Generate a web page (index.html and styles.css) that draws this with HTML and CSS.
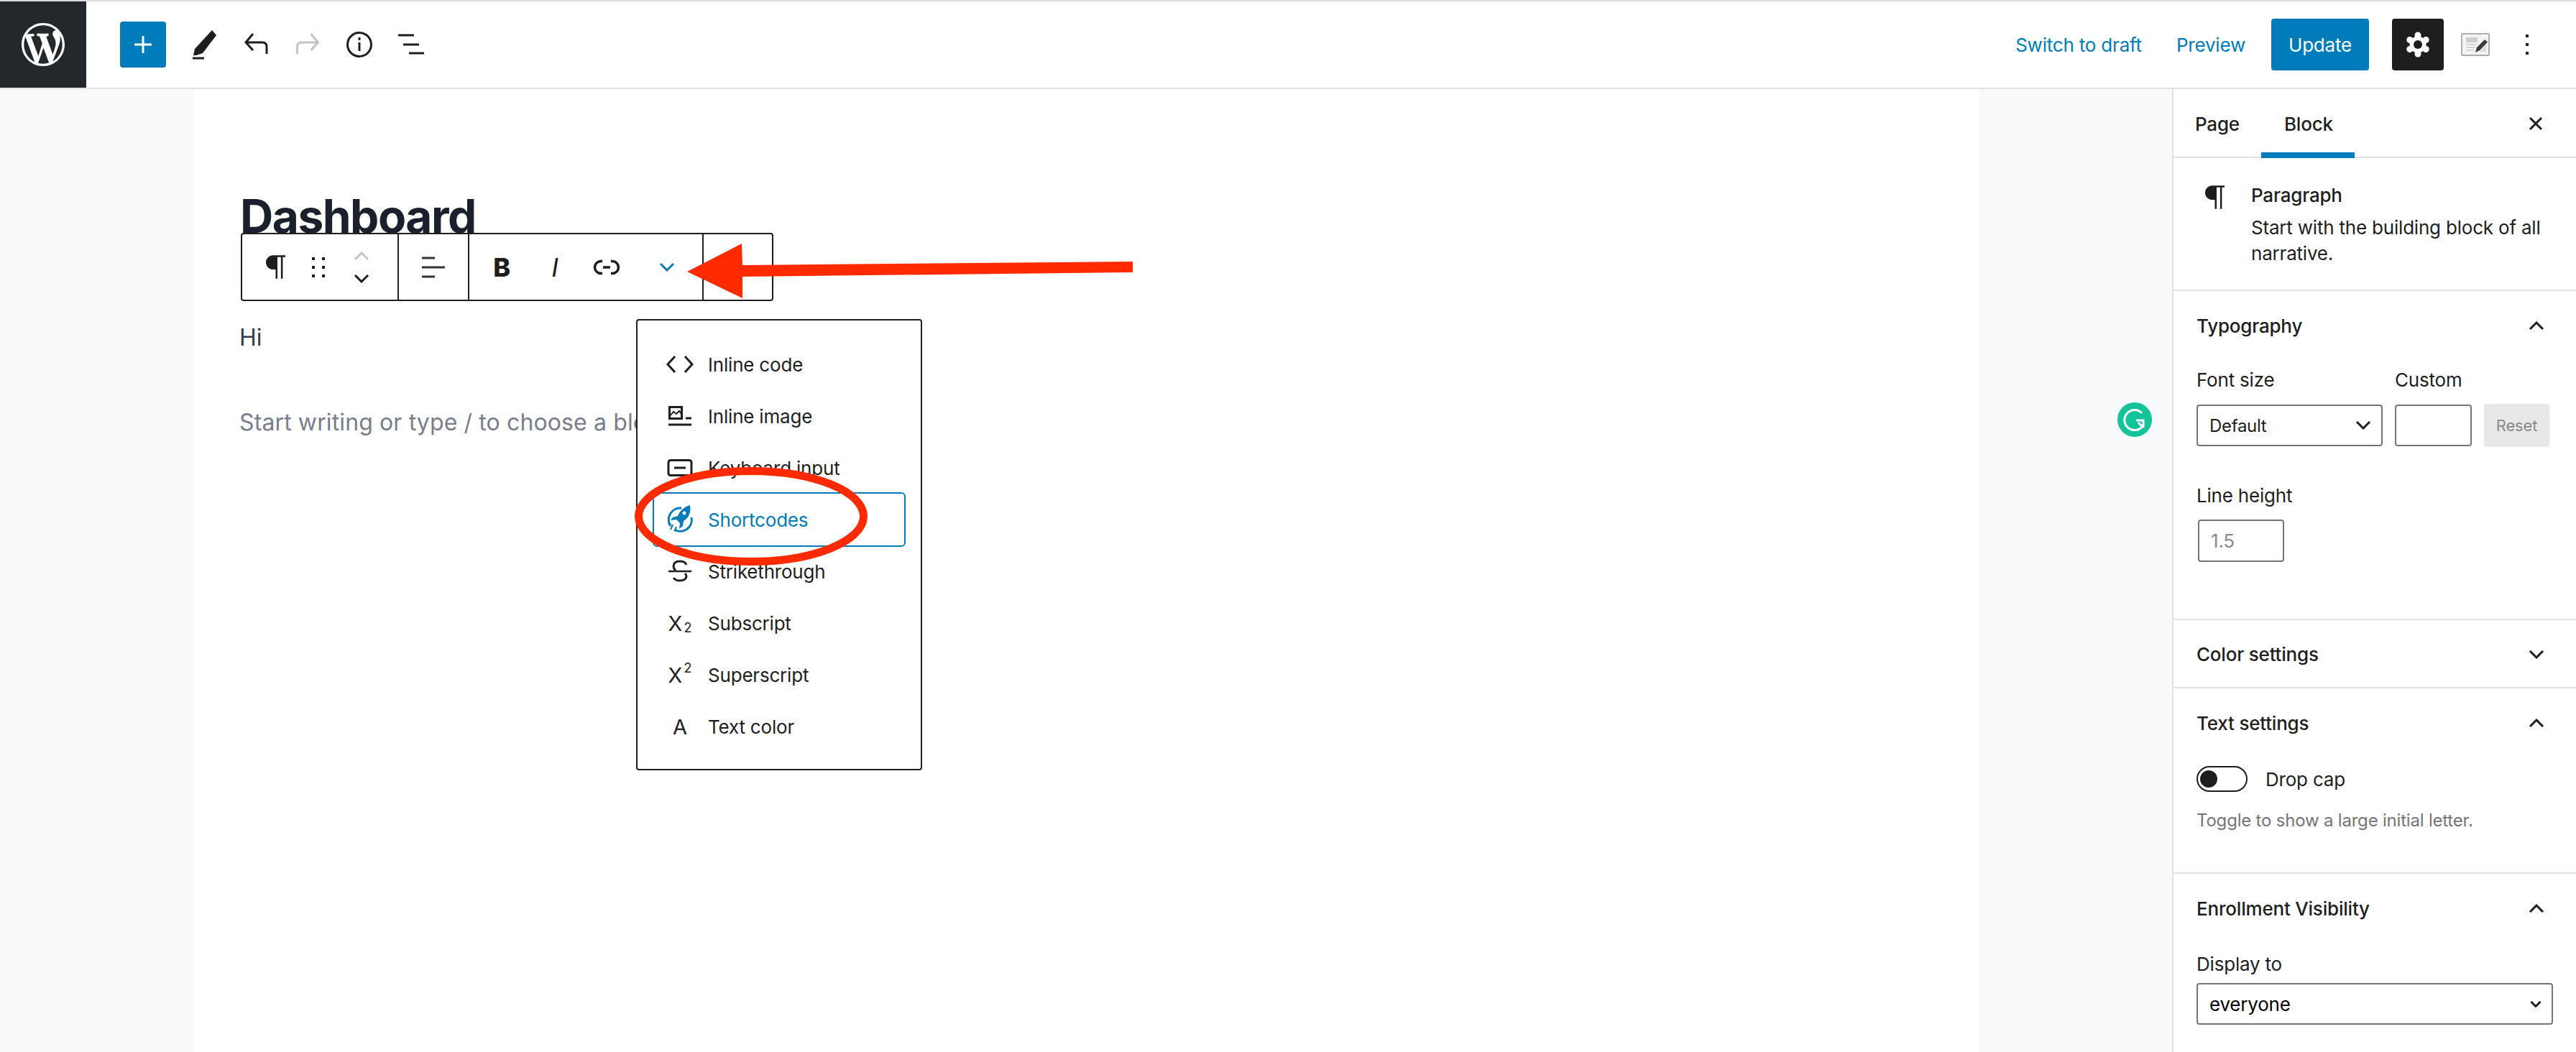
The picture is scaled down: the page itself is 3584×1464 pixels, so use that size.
FILE: index.html
```html
<!DOCTYPE html>
<html lang="en">
<head>
<meta charset="utf-8">
<title>Dashboard</title>
<link rel="stylesheet" href="styles.css">
</head>
<body>
<header class="topbar">
  <a class="logo"><svg class="logo-mark" viewBox="0 0 20 20"><path d="M20 10c0-5.51-4.49-10-10-10C4.48 0 0 4.49 0 10c0 5.52 4.48 10 10 10 5.51 0 10-4.48 10-10zM7.78 15.37L4.37 6.22c.55-.02 1.17-.08 1.17-.08.5-.06.44-1.13-.06-1.11 0 0-1.45.11-2.37.11-.18 0-.37 0-.58-.01C4.12 2.69 6.87 1.11 10 1.11c2.33 0 4.45.87 6.05 2.34-.68-.11-1.65.39-1.65 1.58 0 .74.45 1.36.9 2.1.35.61.55 1.36.55 2.46 0 1.49-1.4 5-1.4 5l-3.03-8.37c.54-.02.82-.17.82-.17.5-.05.44-1.25-.06-1.22 0 0-1.44.12-2.38.12-.87 0-2.33-.12-2.33-.12-.5-.03-.56 1.2-.06 1.22l.92.08 1.26 3.41zM17.41 10c.24-.64.74-1.87.43-4.25.7 1.29 1.05 2.71 1.05 4.25 0 3.29-1.73 6.24-4.4 7.78.97-2.59 1.94-5.2 2.92-7.78zM6.1 18.09C3.12 16.65 1.11 13.53 1.11 10c0-1.3.23-2.48.72-3.59C3.25 10.3 4.67 14.2 6.1 18.09zm4.03-6.63l2.58 6.98c-.86.29-1.76.45-2.71.45-.79 0-1.57-.11-2.29-.33.81-2.38 1.62-4.74 2.42-7.1z"/></svg></a>
  <div class="tools">
    <button class="inserter"><svg width="26" height="26" viewBox="0 0 26 26"><path d="M13 1v24M1 13h24" class="s-white"/></svg></button>
    <svg class="tool" viewBox="0 0 40 44"><path class="f-dark" d="M31 2l6 7-19 25-9 3-4 0 2-9z"/><path class="s-dark" d="M4 41h16"/></svg>
    <svg class="tool" viewBox="0 0 40 44"><path class="s-dark" d="M16 7L6 19l10 11M6 19h23c4 0 6 2 6 6v10"/></svg>
    <svg class="tool" viewBox="0 0 40 44"><path class="s-muted" d="M24.5 7l10 12-10 11M34.5 19h-23c-4 0-6 2-6 6v10"/></svg>
    <svg class="tool" viewBox="0 0 40 44"><circle class="s-dark" cx="20" cy="22" r="16.5"/><path class="s-dark" d="M20 19v12M20 12v4"/></svg>
    <svg class="tool" viewBox="0 0 40 44"><path class="s-dark" d="M2 9h22M9 22h22M17 34h21"/></svg>
  </div>
  <div class="actions">
    <a class="link">Switch to draft</a>
    <a class="link">Preview</a>
    <button class="update">Update</button>
    <button class="gear-btn"><svg width="34" height="36" viewBox="0 0 34 36"><g class="f-white"><circle cx="17" cy="18" r="11.5"/><circle cx="17" cy="5" r="4.5"/><circle cx="17" cy="31" r="4.5"/><circle cx="5.8" cy="11.5" r="4.5"/><circle cx="28.2" cy="11.5" r="4.5"/><circle cx="5.8" cy="24.5" r="4.5"/><circle cx="28.2" cy="24.5" r="4.5"/></g><circle class="f-ink" cx="17" cy="18" r="6"/></svg></button>
    <svg class="post-icon" viewBox="0 0 40 32"><rect x="1" y="1" width="38" height="30" rx="1.5" class="frame"/><path class="f-lite" d="M7 6h16v7H7z"/><path class="s-grey2" d="M7 16h15M7 20h13M7 24h11"/><path class="f-paper" d="M26 26h9V13z"/><path class="f-dots" d="M30 2h2v2h-2zM33 2h2v2h-2zM36 2h2v2h-2z"/><path class="f-dark2" d="M20 27l2-7L33 9l4 3.500L26 24z"/></svg>
    <span class="kebab"><i></i><i></i><i></i></span>
  </div>
</header>

<main class="workspace">
  <section class="canvas">
    <div class="sheet">
      <h1 class="title">Dashboard</h1>
      <p class="hi">Hi</p>
      <p class="placeholder">Start writing or type / to choose a block</p>

      <div class="block-toolbar">
        <div class="tb-group tb-first">
          <span class="cell"><svg class="pil" viewBox="0 0 15 18"><path d="M5.5 0C2.500 0 0 2.500 0 5.500S2.500 11 5.500 11H7.500v7h1.400V1.400h2.700V18h1.400V1.400H15V0z"/></svg></span>
          <span class="cell"><svg width="20" height="30" viewBox="0 0 20 30"><path class="f-ink" d="M1 1h4v4H1zM15 1h4v4h-4zM1 13h4v4H1zM15 13h4v4h-4zM1 25h4v4H1zM15 25h4v4h-4z"/></svg></span>
          <span class="cell movers"><svg class="chev-svg" viewBox="0 0 22 12"><path class="s-muted" d="M2 11l9-9 9 9"/></svg><svg class="chev-svg" viewBox="0 0 22 12"><path class="s-dark" d="M2 1l9 9 9-9"/></svg></span>
        </div>
        <div class="tb-group tb-align"><svg width="34" height="32" viewBox="0 0 34 32"><path class="s-grey3" d="M1 3h18M1 16h32M1 29h18"/></svg></div>
        <div class="tb-group tb-format">
          <span class="cell glyph-b">B</span>
          <span class="cell glyph-i">I</span>
          <span class="cell cell-link"><svg width="38" height="24" viewBox="0 0 38 24"><path class="s-dark s-link" d="M13 3.500H11a8.500 8.500 0 0 0 0 17h2M25 3.500h2a8.500 8.500 0 0 1 0 17h-2M14 12h10"/></svg></span>
          <span class="cell cell-more"><svg width="22" height="14" viewBox="0 0 22 14"><path class="s-blue" d="M2 2l9 9 9-9"/></svg></span>
        </div>
        <div class="tb-group tb-last"></div>
      </div>

      <div class="popover">
        <div class="menu-item"><span class="mi"><svg class="mi-svg" viewBox="0 0 44 44"><path class="s-dark" d="M15 11L5 22l10 11M29 11l10 11-10 11"/></svg></span>Inline code</div>
        <div class="menu-item"><span class="mi"><svg class="mi-svg" viewBox="0 0 44 44"><rect class="s-dark" x="7.500" y="9.500" width="17" height="16"/><path class="s-thin" d="M9 21l4-5 4 3 4-4 3 4"/><path class="s-dark" d="M30 25h8M6 34h32"/></svg></span>Inline image</div>
        <div class="menu-item"><span class="mi"><svg class="mi-svg" viewBox="0 0 44 44"><rect class="s-dark" x="6" y="11.500" width="32" height="21" rx="3"/><path class="s-dark" d="M14 22h16"/></svg></span>Keyboard input</div>
        <div class="menu-item is-active"><span class="mi"><svg class="mi-svg" viewBox="0 0 44 44"><path class="s-blue" d="M24 6.200A16 16 0 0 0 9 31M14 36a16 16 0 0 0 24-17"/><path class="f-blue" d="M36 2c-8 2-14 8-17 15l-7 2-3 4 8-1 5 5-1 8 5-4 1-7c7-4 11-12 9-22z"/><circle class="f-white" cx="28" cy="13" r="2.500"/><path class="s-thin-blue" d="M12 29l-3 7M17 32l-2 6M8 26l-2 3"/></svg></span>Shortcodes</div>
        <div class="menu-item"><span class="mi"><svg class="mi-svg" viewBox="0 0 44 44"><path class="s-dark" d="M31 13c-1-3-4-5-9-5-6 0-9 3-9 7 0 2 1 4 3 6M29 25c2 2 2 3 2 4 0 3-3 6-9 6-4 0-7-1-9-4"/><path class="s-mid" d="M6 22h32"/></svg></span>Strikethrough</div>
        <div class="menu-item"><span class="mi mi-text">X<sub class="sub">2</sub></span>Subscript</div>
        <div class="menu-item"><span class="mi mi-text">X<sup class="sup">2</sup></span>Superscript</div>
        <div class="menu-item"><span class="mi mi-text">A</span>Text color</div>
      </div>
    </div>
    <span class="grammarly"><svg width="48" height="48" viewBox="0 0 48 48"><circle cx="24" cy="24" r="24" class="g-bg"/><path class="g-arc" d="M34 15a14 14 0 1 0 1 18M26 25h10v10M36 35l-7-7"/></svg></span>
  </section>

  <aside class="sidebar">
    <div class="tabs">
      <span class="tab">Page</span>
      <span class="tab is-current">Block</span>
      <svg class="close" width="20" height="20" viewBox="0 0 20 20"><path class="s-dark" d="M2 2l16 16M18 2L2 18"/></svg>
    </div>
    <div class="panel card">
      <svg class="card-icon" viewBox="0 0 15 18"><path d="M5.500 0C2.500 0 0 2.500 0 5.500S2.500 11 5.500 11H7.500v7h1.400V1.400h2.700V18h1.400V1.400H15V0z"/></svg>
      <div>
        <div class="card-title">Paragraph</div>
        <div class="card-desc">Start with the building block of all narrative.</div>
      </div>
    </div>
    <div class="panel typo">
      <div class="panel-head">Typography<svg class="chev" viewBox="0 0 22 12"><path class="s-dark" d="M2 11l9-9 9 9"/></svg></div>
      <div class="size-row">
        <div class="col-size">
          <div class="label">Font size</div>
          <div class="select">Default<svg class="chev" viewBox="0 0 22 12"><path class="s-dark" d="M2 1l9 9 9-9"/></svg></div>
        </div>
        <div class="col-custom">
          <div class="label">Custom</div>
          <div class="input"></div>
        </div>
        <button class="reset">Reset</button>
      </div>
      <div class="label lh-label">Line height</div>
      <div class="input lh-input">1.5</div>
    </div>
    <div class="panel colors">
      <div class="panel-head short">Color settings<svg class="chev" viewBox="0 0 22 12"><path class="s-dark" d="M2 1l9 9 9-9"/></svg></div>
    </div>
    <div class="panel text-set">
      <div class="panel-head">Text settings<svg class="chev" viewBox="0 0 22 12"><path class="s-dark" d="M2 11l9-9 9 9"/></svg></div>
      <div class="toggle-row"><span class="toggle"><span class="knob"></span></span>Drop cap</div>
      <p class="help">Toggle to show a large initial letter.</p>
    </div>
    <div class="panel enroll">
      <div class="panel-head">Enrollment Visibility<svg class="chev" viewBox="0 0 22 12"><path class="s-dark" d="M2 11l9-9 9 9"/></svg></div>
      <div class="label">Display to</div>
      <div class="select wide">everyone<svg class="chev-sm" viewBox="0 0 22 12"><path class="s-dark s-wide" d="M2 1l9 9 9-9"/></svg></div>
    </div>
  </aside>
</main>

<svg class="annotations" width="3584" height="1464" viewBox="0 0 3584 1464">
  <ellipse class="ring" cx="1045" cy="718.5" rx="156.5" ry="63"/>
  <path class="arrow" d="M956 378L1032 339L1033 369L1576 364L1576 379L1033 385L1033 415Z"/>
</svg>
</body>
</html>
```
FILE: styles.css
```css
* { box-sizing: border-box; }
html, body { margin: 0; height: 1464px; overflow: hidden; }
body {
  position: relative;
  display: flex;
  flex-direction: column;
  background: #fff;
  color: #1e1e1e;
  font-family: Inter, "Noto Sans", "Liberation Sans", sans-serif;
  font-size: 26px;
  letter-spacing: -0.2px;
}
button { font: inherit; letter-spacing: inherit; border: 0; padding: 0; }
svg { display: block; flex: none; }

/* svg paint helpers */
.s-dark, .s-muted, .s-white, .s-blue, .s-thin, .s-mid, .s-grey2, .s-grey3, .s-thin-blue { fill: none; stroke-width: 3; }
.s-dark { stroke: #1e1e1e; }
.s-muted { stroke: #c4c4c4; }
.s-white { stroke: #fff; }
.s-blue { stroke: #007cba; }
.s-thin { stroke: #1e1e1e; stroke-width: 2; }
.s-mid { stroke: #1e1e1e; stroke-width: 2.5; }
.s-thin-blue { stroke: #007cba; stroke-width: 2; }
.s-grey2 { stroke: #c8c8c8; stroke-width: 1.5; }
.s-grey3 { stroke: #333; }
.s-link { stroke-width: 3.5; }
.s-wide { stroke-width: 4; }
.f-dark { fill: #1e1e1e; }
.f-dark2 { fill: #3a3a3a; }
.f-ink { fill: #1e1e1e; }
.f-white { fill: #fff; }
.f-blue { fill: #007cba; }
.f-lite { fill: #cfcfcf; }
.f-paper { fill: #dedede; }
.f-dots { fill: #fff; }
.frame { fill: #f4f4f4; stroke: #adadad; stroke-width: 2; }

/* top bar */
.topbar {
  flex: none;
  height: 124px;
  display: flex;
  align-items: center;
  background: #fff;
  border-top: 2px solid #dcdce2;
  border-bottom: 2px solid #e2e2e4;
}
.logo {
  width: 120px;
  height: 120px;
  background: #23282d;
  display: flex;
  align-items: center;
  justify-content: center;
}
.logo-mark { width: 60px; height: 60px; fill: #fff; }
.tools { display: flex; align-items: center; margin-left: 47px; }
.inserter {
  width: 64px;
  height: 64px;
  margin-right: 33px;
  border-radius: 4px;
  background: #007cba;
  display: flex;
  align-items: center;
  justify-content: center;
}
.tool { width: 40px; height: 44px; margin-right: 32px; }
.actions { margin-left: auto; display: flex; align-items: center; }
.link { color: #007cba; margin-right: 48px; }
.link + .link { margin-right: 36px; }
.update {
  width: 136px;
  height: 72px;
  margin-right: 32px;
  border-radius: 4px;
  background: #007cba;
  color: #fff;
}
.gear-btn {
  width: 72px;
  height: 72px;
  margin-right: 24px;
  border-radius: 4px;
  background: #1e1e1e;
  display: flex;
  align-items: center;
  justify-content: center;
}
.post-icon { width: 40px; height: 32px; margin-right: 50px; }
.kebab { display: flex; flex-direction: column; gap: 8px; margin-right: 66px; }
.kebab i { width: 4px; height: 4px; background: #1e1e1e; }

/* workspace */
.workspace { flex: 1; display: flex; min-height: 0; }
.canvas {
  position: relative;
  flex: 1;
  background: #f8f9fb;
  padding: 0 268px 0 270px;
}
.sheet {
  position: relative;
  height: 100%;
  background: #fff;
  padding: 142px 0 0 63px;
}
.title {
  margin: 0 0 0 1px;
  font-size: 64px;
  line-height: 70px;
  font-weight: 700;
  letter-spacing: -1.5px;
  color: #1a202c;
}
.hi {
  margin: 110px 0 0;
  font-size: 32px;
  line-height: 48px;
  letter-spacing: 0;
  color: #333c4d;
}
.placeholder {
  margin: 70px 0 0;
  font-size: 32px;
  line-height: 48px;
  letter-spacing: 0.12px;
  color: #787e8c;
  white-space: nowrap;
}

/* block toolbar */
.block-toolbar {
  position: absolute;
  left: 65px;
  top: 200px;
  width: 741px;
  height: 95px;
  display: flex;
  background: #fff;
  border: 2px solid #1e1e1e;
  border-radius: 4px;
}
.tb-group { display: flex; align-items: center; height: 100%; border-right: 2px solid #1e1e1e; }
.tb-first { width: 218px; padding-left: 16px; }
.tb-align { width: 98px; justify-content: center; }
.tb-format { width: 326px; padding-left: 8px; }
.tb-last { flex: 1; border-right: 0; }
.cell { width: 60px; height: 60px; display: flex; align-items: center; justify-content: center; }
.pil { width: 27px; height: 33px; fill: #1e1e1e; }
.movers { flex-direction: column; gap: 20px; }
.chev-svg { width: 22px; height: 12px; }
.glyph-b, .glyph-i { width: 74px; line-height: 1; font-size: 36px; }
.glyph-b { font-weight: 800; }
.glyph-i { font-style: italic; font-weight: 400; }
.cell-link { width: 70px; }
.cell-more { width: 74px; margin-left: 12px; }

/* popover */
.popover {
  position: absolute;
  left: 615px;
  top: 320px;
  width: 398px;
  height: 628px;
  padding: 25px 23px 0;
  background: #fff;
  border: 2px solid #1e1e1e;
  border-radius: 4px;
}
.menu-item { height: 72px; display: flex; align-items: center; padding-left: 6px; white-space: nowrap; }
.menu-item.is-active { color: #007cba; outline: 2px solid #007cba; border-radius: 4px; }
.mi { width: 60px; margin-right: 9px; display: flex; align-items: center; justify-content: center; }
.mi-svg { width: 44px; height: 44px; }
.mi-text { font-size: 29px; letter-spacing: 0; position: relative; }
.sub, .sup { font-size: 18px; line-height: 1; }
.sub { align-self: flex-end; margin: 0 0 2px 2px; }
.sup { align-self: flex-start; margin: -1px 0 0 2px; }

/* grammarly */
.grammarly { position: absolute; left: 2946px; top: 436px; }
.g-bg { fill: #15c39a; }
.g-arc { fill: none; stroke: #fff; stroke-width: 3; }

/* sidebar */
.sidebar { flex: none; width: 562px; border-left: 2px solid #e2e2e4; background: #fff; }
.tabs {
  position: relative;
  height: 96px;
  display: flex;
  box-shadow: inset 0 -2px 0 #e2e2e4;
}
.tab { height: 96px; padding: 0 30px; display: flex; align-items: center; font-weight: 500; }
.tab.is-current { border-bottom: 8px solid #007cba; padding-top: 8px; padding-left: 32px; }
.close { margin: 38px 0 0 auto; margin-right: 46px; }
.panel { border-bottom: 2px solid #e2e2e4; padding: 0 32px; }
.panel-head {
  height: 96px;
  display: flex;
  align-items: center;
  justify-content: space-between;
  padding-right: 12px;
  font-weight: 500;
}
.panel-head.short { height: 93px; padding-top: 2px; }
.chev { width: 22px; height: 12px; }
.chev-sm { width: 16px; height: 9px; }
.card { display: flex; padding-top: 34px; height: 185px; }
.card-icon { width: 27px; height: 33px; margin: 4px 37px 0 12px; fill: #1e1e1e; }
.card-title { line-height: 36px; margin-bottom: 9px; font-weight: 500; }
.card-desc { line-height: 36px; }
.typo { height: 458px; }
.label { line-height: 36px; }
.size-row { display: flex; margin-top: 10px; }
.col-size { width: 259px; margin-right: 17px; }
.col-custom { width: 107px; margin-right: 17px; }
.select, .input {
  height: 58px;
  margin-top: 16px;
  border: 2px solid #757575;
  border-radius: 4px;
  display: flex;
  align-items: center;
  font-size: 24px;
}
.select { justify-content: space-between; padding: 0 14px 0 16px; letter-spacing: -0.3px; }
.reset {
  width: 91px;
  height: 60px;
  margin-top: 51px;
  border-radius: 4px;
  background: #e8e8e8;
  color: #8a8a8a;
  font-size: 22px;
}
.lh-label { margin-top: 50px; }
.lh-input {
  width: 120px;
  height: 59px;
  margin: 15px 0 0 2px;
  padding-left: 16px;
  font-size: 26px;
  color: #8a8a8a;
}
.text-set { height: 258px; }
.toggle-row { display: flex; align-items: center; margin-top: 12px; }
.toggle {
  width: 71px;
  height: 36px;
  margin-right: 25px;
  padding-left: 3px;
  display: flex;
  align-items: center;
  border: 2px solid #1e1e1e;
  border-radius: 18px;
}
.knob { width: 24px; height: 24px; border-radius: 50%; background: #1e1e1e; }
.help { margin: 22px 0 0; font-size: 24px; line-height: 36px; color: #757575; }
.enroll { border-bottom: 0; }
.enroll .label { margin-top: 12px; }
.select.wide { width: 496px; margin-top: 8px; font-size: 26px; color: #000; letter-spacing: -0.2px; }

/* red hand-drawn annotations */
.annotations { position: absolute; left: 0; top: 0; pointer-events: none; }
.ring { fill: none; stroke: #ff2a00; stroke-width: 11; }
.arrow { fill: #ff2a00; }
```
